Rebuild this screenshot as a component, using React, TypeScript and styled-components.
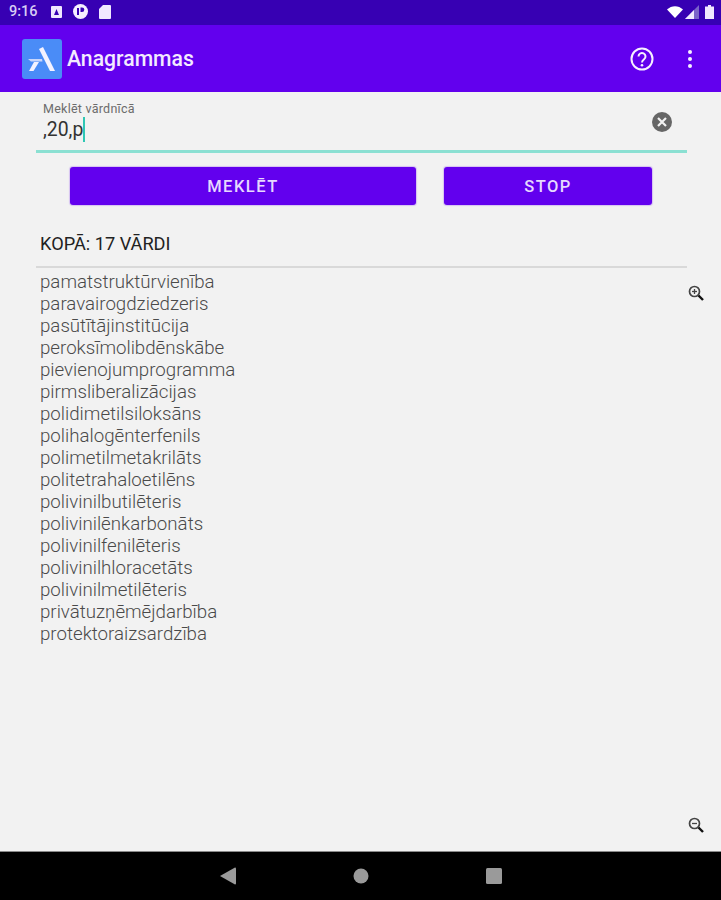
import React from 'react'
import styled, { createGlobalStyle } from 'styled-components'

const words = [
  'pamatstruktūrvienība',
  'paravairogdziedzeris',
  'pasūtītājinstitūcija',
  'peroksīmolibdēnskābe',
  'pievienojumprogramma',
  'pirmsliberalizācijas',
  'polidimetilsiloksāns',
  'polihalogēnterfenils',
  'polimetilmetakrilāts',
  'politetrahaloetilēns',
  'polivinilbutilēteris',
  'polivinilēnkarbonāts',
  'polivinilfenilēteris',
  'polivinilhloracetāts',
  'polivinilmetilēteris',
  'privātuzņēmējdarbība',
  'protektoraizsardzība',
]

const GlobalStyle = createGlobalStyle`
  html, body {
    margin: 0;
    padding: 0;
    background: #f2f2f2;
  }
  body {
    font-family: Roboto, "Liberation Sans", sans-serif;
  }
`

const Screen = styled.div`
  width: 721px;
  height: 900px;
  display: flex;
  flex-direction: column;
  overflow: hidden;
  background: #f2f2f2;
`

const StatusBar = styled.div`
  height: 25px;
  background: #3700b3;
  display: flex;
  align-items: center;
  padding: 0 7px 2px 9px;
  box-sizing: border-box;
  color: #d8cdf5;
`

const Clock = styled.span`
  font-size: 14.5px;
  font-weight: 500;
  margin-right: 13px;
`

const StatusIcons = styled.div`
  display: flex;
  align-items: center;
  gap: 11px;
`

const StatusSpacer = styled.div`
  flex: 1;
`

const AppBar = styled.header`
  height: 67px;
  background: #6200ee;
  display: flex;
  align-items: center;
  padding: 0 29px 0 22px;
  box-sizing: border-box;
  color: #f3eaff;
`

const Title = styled.h1`
  margin: 0 0 0 5px;
  flex: 1;
  font-size: 21.2px;
  font-weight: 500;
  line-height: 24px;
`

const AppActions = styled.div`
  display: flex;
  align-items: center;
  gap: 34px;
`

const Content = styled.main`
  flex: 1;
  display: flex;
  flex-direction: column;
  padding: 0 34px 0 36px;
  min-height: 0;
`

const Field = styled.div`
  border-bottom: 3px solid #8be0d2;
  padding: 10px 0 0 7px;
  height: 48px;
  display: flex;
  align-items: flex-start;
`

const FieldText = styled.div`
  flex: 1;
`

const FieldLabel = styled.div`
  font-size: 12.5px;
  line-height: 13px;
  color: #6c6c6c;
  letter-spacing: 0.25px;
`

const FieldValue = styled.div`
  display: flex;
  align-items: center;
  margin-top: 2px;
  font-size: 19.4px;
  line-height: 24px;
  color: #333;
`

const Caret = styled.span`
  width: 2px;
  height: 25px;
  background: #2fc7b4;
`

const ClearButton = styled.div`
  margin: 10px 15px 0 0;
  line-height: 0;
`

const ButtonRow = styled.div`
  display: flex;
  gap: 28px;
  padding: 14px 0 0 34px;
`

const ActionButton = styled.button<{ $width: number }>`
  width: ${({ $width }) => $width}px;
  height: 38px;
  border: 0;
  border-radius: 3px;
  background: #6200ee;
  color: #e6d8ff;
  font-family: inherit;
  font-size: 16.5px;
  font-weight: 500;
  letter-spacing: 1.5px;
  box-shadow: 0 0 1px 1px rgba(98, 0, 238, 0.2);
`

const Total = styled.div`
  margin-top: 27px;
  padding: 0 0 11px 4px;
  font-size: 18.2px;
  line-height: 23px;
  color: #222;
  border-bottom: 2px solid #d9d9d9;
`

const Results = styled.div`
  flex: 1;
  display: flex;
  justify-content: space-between;
  padding: 3px 0 17px 4px;
  min-height: 0;
`

const WordList = styled.ul`
  list-style: none;
  margin: 0;
  padding: 0;
`

const Word = styled.li`
  font-size: 18.7px;
  font-weight: 300;
  line-height: 22px;
  color: #4a4a4a;
`

const ZoomColumn = styled.div`
  display: flex;
  flex-direction: column;
  justify-content: space-between;
  align-items: center;
  width: 20px;
  margin-right: -19px;
  padding: 13px 0 0;
`

const NavBar = styled.nav`
  height: 49px;
  background: #000;
  border-top: 1px solid #8a8a8a;
  box-sizing: border-box;
  display: flex;
  align-items: center;
  justify-content: center;
  gap: 117px;
`

const ZoomIcon = ({ plus }: { plus: boolean }) => (
  <svg width="18" height="18" viewBox="0 0 18 18" fill="none">
    <circle cx="7.5" cy="7.5" r="5" stroke="#444" strokeWidth="1.7" />
    <path d="M5 7.5h5" stroke="#444" strokeWidth="1.3" />
    {plus && <path d="M7.5 5v5" stroke="#444" strokeWidth="1.3" />}
    <path d="M11.5 11.5L16 16" stroke="#111" strokeWidth="2.4" />
  </svg>
)

export default function App() {
  return (
    <Screen>
      <GlobalStyle />
      <StatusBar>
        <Clock>9:16</Clock>
        <StatusIcons>
          <svg width="11" height="12" viewBox="0 0 11 12">
            <rect width="11" height="12" rx="1" fill="#f0e8ff" />
            <path d="M3 9l2.5-6L8 9z" fill="#3700b3" />
          </svg>
          <svg width="15" height="15" viewBox="0 0 15 15">
            <circle cx="7.5" cy="7.5" r="7.5" fill="#f6f0ff" />
            <rect x="4" y="4" width="2" height="7" fill="#3700b3" />
            <path d="M7.5 3.5h1.5a2.3 2.3 0 0 1 0 4.6H7.5z" fill="#3700b3" />
          </svg>
          <svg width="12" height="14" viewBox="0 0 12 14">
            <path d="M4 0h7a1 1 0 0 1 1 1v12a1 1 0 0 1-1 1H1a1 1 0 0 1-1-1V4z" fill="#f0e8ff" />
          </svg>
        </StatusIcons>
        <StatusSpacer />
        <StatusIcons>
          <svg width="16" height="12" viewBox="0 0 16 12" style={{ marginRight: -9 }}>
            <path d="M0 3.5C4.5-1 11.5-1 16 3.5L8 12z" fill="#fff" />
          </svg>
          <svg width="14" height="14" viewBox="0 0 14 14" style={{ marginRight: -5 }}>
            <path d="M14 0v14H0z" fill="#7a63c9" />
            <path d="M9 5v9H0z" fill="#f0e8ff" />
          </svg>
          <svg width="9" height="14" viewBox="0 0 9 14">
            <path d="M3 0h3v1.500h3V14H0V1.500h3z" fill="#f0e8ff" />
          </svg>
        </StatusIcons>
      </StatusBar>
      <AppBar>
        <svg width="40" height="40" viewBox="0 0 40 40">
          <rect width="40" height="40" rx="3" fill="#4a8cf7" />
          <path d="M17 10l4-2 12 24h-5z" fill="#f4f2ff" />
          <path d="M6 20h14l.5 2.500H9z" fill="#c9d6fb" />
          <path d="M12 23h5l-5.500 9H7z" fill="#f4f2ff" />
        </svg>
        <Title>Anagrammas</Title>
        <AppActions>
          <svg width="24" height="24" viewBox="0 0 24 24" fill="none">
            <circle cx="12" cy="12" r="10.500" stroke="#f6f0ff" strokeWidth="2" />
            <path
              d="M8.500 9.500a3.500 3.500 0 1 1 5.600 2.800c-1.300 1-2.100 1.600-2.100 3.200"
              stroke="#f6f0ff"
              strokeWidth="2"
            />
            <circle cx="12" cy="18.300" r="1.300" fill="#f6f0ff" />
          </svg>
          <svg width="4" height="18" viewBox="0 0 4 18" fill="#f6f0ff">
            <circle cx="2" cy="2" r="2" />
            <circle cx="2" cy="9" r="2" />
            <circle cx="2" cy="16" r="2" />
          </svg>
        </AppActions>
      </AppBar>
      <Content>
        <Field>
          <FieldText>
            <FieldLabel>Meklēt vārdnīcā</FieldLabel>
            <FieldValue>
              ,20,p
              <Caret />
            </FieldValue>
          </FieldText>
          <ClearButton>
            <svg width="20" height="20" viewBox="0 0 20 20">
              <circle cx="10" cy="10" r="10" fill="#666" />
              <path d="M6 6l8 8M14 6l-8 8" stroke="#f2f2f2" strokeWidth="2.200" />
            </svg>
          </ClearButton>
        </Field>
        <ButtonRow>
          <ActionButton $width={346}>MEKLĒT</ActionButton>
          <ActionButton $width={208}>STOP</ActionButton>
        </ButtonRow>
        <Total>KOPĀ: 17 VĀRDI</Total>
        <Results>
          <WordList>
            {words.map((word) => (
              <Word key={word}>{word}</Word>
            ))}
          </WordList>
          <ZoomColumn>
            <ZoomIcon plus />
            <ZoomIcon plus={false} />
          </ZoomColumn>
        </Results>
      </Content>
      <NavBar>
        <svg width="16" height="18" viewBox="0 0 16 18">
          <path d="M0 9L15 0.500a1 1 0 0 1 1 1v15a1 1 0 0 1-1 1z" fill="#9a9a9a" />
        </svg>
        <svg width="16" height="16" viewBox="0 0 16 16">
          <circle cx="8" cy="8" r="7.500" fill="#9a9a9a" />
        </svg>
        <svg width="16" height="16" viewBox="0 0 16 16">
          <rect width="16" height="16" rx="1.500" fill="#9a9a9a" />
        </svg>
      </NavBar>
    </Screen>
  )
}
